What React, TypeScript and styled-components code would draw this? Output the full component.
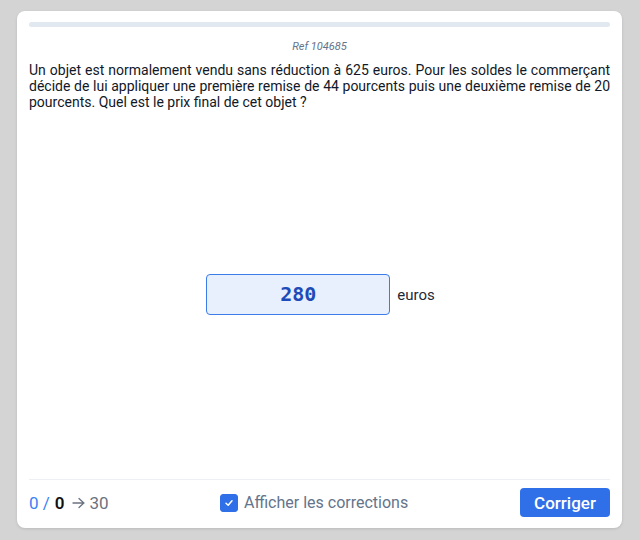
import styled, { createGlobalStyle } from 'styled-components';
import { useState } from 'react';

const GlobalStyle = createGlobalStyle`
  html, body {
    margin: 0;
    padding: 0;
    background: #d4d4d4;
    font-family: Roboto, "Noto Sans", sans-serif;
  }
`;

const Page = styled.div`
  box-sizing: border-box;
  height: 540px;
  padding: 11px 18px 12px 17px;
`;
const Card = styled.div`
  box-sizing: border-box;
  height: 100%;
  background: #fff;
  border-radius: 8px;
  box-shadow: 0 1px 3px rgba(0, 0, 0, 0.12);
  padding: 11px 12px 11px 12px;
  display: flex;
  flex-direction: column;
`;
const Progress = styled.div`
  height: 5px;
  border-radius: 3px;
  background: #e2e8f0;
`;
const RefLine = styled.div`
  margin-top: 13px;
  font-size: 11px;
  font-style: italic;
  color: #64748b;
  text-align: center;
`;
const Question = styled.p`
  margin: 9px 0 0;
  font-size: 14px;
  line-height: 16px;
  color: #111827;
  text-align: justify;
`;
const Answer = styled.div`
  flex: 1;
  display: flex;
  align-items: center;
  justify-content: center;
  gap: 7px;
  padding-left: 2px;
`;
const Field = styled.input`
  box-sizing: border-box;
  width: 184px;
  height: 41px;
  border: 1px solid #3b7ce9;
  border-radius: 4px;
  background: #e8effd;
  color: #1e4bb8;
  font-family: "DejaVu Sans Mono", monospace;
  font-weight: bold;
  font-size: 20px;
  text-align: center;
  outline: none;
  padding-bottom: 2px;
`;
const Unit = styled.span`
  font-size: 15px;
  color: #1f2937;
`;
const Footer = styled.div`
  border-top: 1px solid #eceff3;
  padding-top: 8px;
  display: flex;
  align-items: center;
`;
const Score = styled.div`
  display: flex;
  align-items: center;
  gap: 5px;
  font-size: 17px;
  color: #6b7280;
  width: 191px;
`;
const Good = styled.span`
  color: #3b82f6;
`;
const Total = styled.span`
  color: #111;
  font-weight: 600;
  margin-right: 2px;
`;
const Toggle = styled.label`
  display: flex;
  align-items: center;
  gap: 6px;
  font-size: 16px;
  color: #64748b;
  cursor: pointer;
`;
const Box = styled.span<{ checked: boolean }>`
  width: 18px;
  height: 18px;
  border-radius: 3px;
  background: ${({ checked }) => (checked ? '#2f6fe8' : '#fff')};
  border: 1px solid ${({ checked }) => (checked ? '#2f6fe8' : '#9ca3af')};
  box-sizing: border-box;
  display: flex;
  align-items: center;
  justify-content: center;
`;
const Button = styled.button`
  margin-left: auto;
  width: 90px;
  height: 29px;
  border: none;
  border-radius: 4px;
  background: #2f6fe8;
  color: #fff;
  font-family: inherit;
  font-size: 17px;
  font-weight: 500;
  cursor: pointer;
`;

export default function App() {
  const [value, setValue] = useState('280');
  const [show, setShow] = useState(true);

  return (
    <Page>
      <GlobalStyle />
      <Card>
        <Progress />
        <RefLine>Ref 104685</RefLine>
        <Question>
          Un objet est normalement vendu sans réduction à 625 euros. Pour les soldes le commerçant
          décide de lui appliquer une première remise de 44 pourcents puis une deuxième remise de 20
          pourcents. Quel est le prix final de cet objet ?
        </Question>
        <Answer>
          <Field value={value} onChange={(e) => setValue(e.target.value)} />
          <Unit>euros</Unit>
        </Answer>
        <Footer>
          <Score>
            <Good>0 /</Good>
            <Total>0</Total>
            <svg width="13" height="12" viewBox="0 0 13 12">
              <path d="M1 6 H12 M7 1.5 L11.8 6 L7 10.5" stroke="#6b7280" strokeWidth="1.3" fill="none" strokeLinecap="round" strokeLinejoin="round" />
            </svg>
            <span>30</span>
          </Score>
          <Toggle onClick={() => setShow(!show)}>
            <Box checked={show}>
              {show && (
                <svg width="10" height="10" viewBox="0 0 10 10">
                  <path d="M2 5.2 L4.2 7.3 L8 2.8" stroke="#fff" strokeWidth="1.5" fill="none" strokeLinecap="round" strokeLinejoin="round" />
                </svg>
              )}
            </Box>
            Afficher les corrections
          </Toggle>
          <Button>Corriger</Button>
        </Footer>
      </Card>
    </Page>
  );
}
